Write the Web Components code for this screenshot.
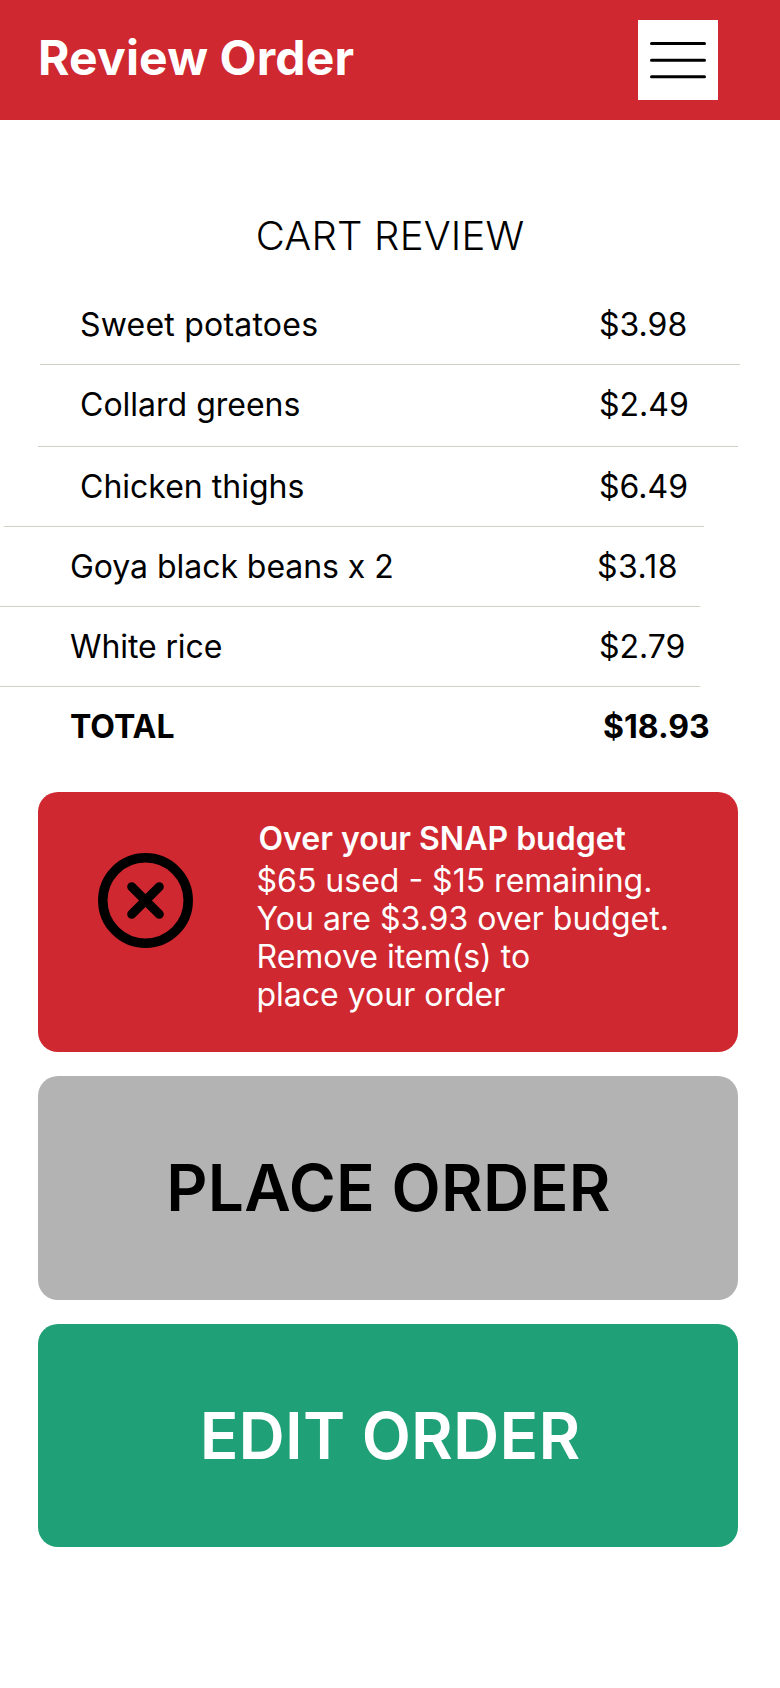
<!DOCTYPE html>
<html lang="en">
<head>
<meta charset="utf-8">
<title>Review Order</title>
<style>
    html, body { margin: 0; padding: 0; background: #fff; }
    body { font-family: Inter, "Liberation Sans", sans-serif; color: #000; }
</style>
</head>
<body>
<order-page>
    <app-header>Review Order</app-header>
    <cart-review heading="CART REVIEW">
        <cart-row inset="40" name-x="40" price-x="559" height="82" shift="1" name-spacing="0.22" name="Sweet potatoes" price="$3.98"></cart-row>
        <cart-row inset="38" name-x="42" price-x="561" height="82" shift="-1" name="Collard greens" price="$2.49"></cart-row>
        <cart-row inset="4" name-x="76" price-x="595" height="80" name="Chicken thighs" price="$6.49"></cart-row>
        <cart-row inset="0" name-x="70" price-x="597" height="80" name-spacing="-0.05" price-spacing="0.4" name="Goya black beans x 2" price="$3.18"></cart-row>
        <cart-row inset="0" name-x="70" price-x="599" height="80" name-spacing="-0.1" name="White rice" price="$2.79"></cart-row>
        <cart-row inset="0" name-x="70" price-x="603" height="80" shift="-1" name="TOTAL" price="$18.93" total></cart-row>
    </cart-review>
    <budget-alert heading="Over your SNAP budget">
        $65 used - $15 remaining.<br>You are $3.93 over budget.<br>Remove item(s) to<br>place your order
    </budget-alert>
    <action-button kind="disabled" weight="600" nudge="1" spacing="0.3">PLACE ORDER</action-button>
    <action-button kind="edit" weight="600" nudge="4" spacing="0.2">EDIT ORDER</action-button>
</order-page>
<script>
class OrderPage extends HTMLElement {
    connectedCallback() {
        this.attachShadow({ mode: 'open' });
        this.shadowRoot.innerHTML = `
            <style>
                :host {
                    display: block;
                    width: 780px;
                    height: 1688px;
                    overflow: hidden;
                    background: #fff;
                }
            </style>
            <slot></slot>
        `;
    }
}

class AppHeader extends HTMLElement {
    connectedCallback() {
        this.attachShadow({ mode: 'open' });
        this.shadowRoot.innerHTML = `
            <style>
                :host {
                    display: flex;
                    justify-content: space-between;
                    align-items: center;
                    box-sizing: border-box;
                    height: 120px;
                    padding: 0 62px 0 38px;
                    background: #cf2830;
                    color: #fff;
                }
                .title {
                    margin-top: -4px;
                    font-size: 48px;
                    font-weight: 700;
                    line-height: 1;
                    letter-spacing: 0.15px;
                }
                svg {
                    display: block;
                    width: 80px;
                    height: 80px;
                    background: #fff;
                }
            </style>
            <div class="title"><slot></slot></div>
            <svg viewBox="0 0 80 80" stroke="#000" stroke-width="3" stroke-linecap="round" aria-label="Menu">
                <path d="M13.5 23.4H66.5M13.5 40.2H66.5M13.5 56.7H66.5"/>
            </svg>
        `;
    }
}

class CartReview extends HTMLElement {
    connectedCallback() {
        this.attachShadow({ mode: 'open' });
        this.shadowRoot.innerHTML = `
            <style>
                :host {
                    display: block;
                    padding-top: 89px;
                }
                h2 {
                    margin: 0 0 21px;
                    height: 53px;
                    font-size: 40px;
                    font-weight: 300;
                    line-height: 53px;
                    letter-spacing: 0.2px;
                    text-align: center;
                }
            </style>
            <h2>${this.getAttribute('heading')}</h2>
            <slot></slot>
        `;
    }
}

class CartRow extends HTMLElement {
    connectedCallback() {
        const inset = this.getAttribute('inset');
        const nameX = this.getAttribute('name-x');
        const priceX = this.getAttribute('price-x');
        const total = this.hasAttribute('total');
        // shift moves the text down (or up) inside its row, the divider stays put
        const shift = Number(this.getAttribute('shift') || 0);
        this.attachShadow({ mode: 'open' });
        this.shadowRoot.innerHTML = `
            <style>
                :host {
                    display: grid;
                    grid-template-columns: ${priceX}px 1fr;
                    align-items: center;
                    box-sizing: border-box;
                    width: ${total ? 720 : 700}px;
                    height: ${this.getAttribute('height')}px;
                    margin-left: ${inset}px;
                    padding-left: ${nameX}px;
                    padding-top: ${Math.max(shift, 0) * 2}px;
                    padding-bottom: ${Math.max(-shift, 0) * 2}px;
                    font-size: 32px;
                    font-weight: ${total ? 700 : 400};
                    border-bottom: ${total ? 'none' : '1px solid #d0d0c4'};
                }
                .name { letter-spacing: ${this.getAttribute('name-spacing') || 0}px; }
                .price {
                    margin-left: -${nameX}px;
                    letter-spacing: ${this.getAttribute('price-spacing') || 0}px;
                }
            </style>
            <div class="name">${this.getAttribute('name')}</div>
            <div class="price">${this.getAttribute('price')}</div>
        `;
    }
}

class BudgetAlert extends HTMLElement {
    connectedCallback() {
        this.attachShadow({ mode: 'open' });
        this.shadowRoot.innerHTML = `
            <style>
                :host {
                    display: flex;
                    align-items: flex-start;
                    box-sizing: border-box;
                    width: 700px;
                    height: 260px;
                    margin: 25px 0 0 38px;
                    border-radius: 20px;
                    background: #cf2830;
                    color: #fff;
                }
                svg {
                    flex: none;
                    width: 95px;
                    height: 95px;
                    margin: 61px 64px 0 59.5px;
                }
                .text { padding-top: 28px; font-size: 32px; line-height: 38px; }
                h3 {
                    margin: 0 0 4px 2px;
                    font-size: 32px;
                    font-weight: 600;
                    line-height: 38px;
                }
            </style>
            <svg viewBox="0 0 95 95" fill="none" stroke="#000" stroke-linecap="round">
                <circle cx="47.5" cy="47.5" r="42.7" stroke-width="9.5"/>
                <path d="M33.7 33.7 L61.3 61.3 M61.3 33.7 L33.7 61.3" stroke-width="9"/>
            </svg>
            <div class="text">
                <h3>${this.getAttribute('heading')}</h3>
                <slot></slot>
            </div>
        `;
    }
}

class ActionButton extends HTMLElement {
    connectedCallback() {
        const colors = {
            disabled: { bg: '#b3b3b3', fg: '#000' },
            edit: { bg: '#1fa076', fg: '#fff' }
        };
        const c = colors[this.getAttribute('kind')];
        this.attachShadow({ mode: 'open' });
        this.shadowRoot.innerHTML = `
            <style>
                :host {
                    display: flex;
                    justify-content: center;
                    align-items: center;
                    box-sizing: border-box;
                    width: 700px;
                    height: 223.5px;
                    margin: 24px 0 0 38px;
                    padding-left: ${this.getAttribute('nudge')}px;
                    border-radius: 20px;
                    background: ${c.bg};
                    color: ${c.fg};
                    font-size: 64px;
                    font-weight: ${this.getAttribute('weight')};
                    letter-spacing: ${this.getAttribute('spacing')}px;
                }
            </style>
            <slot></slot>
        `;
    }
}

customElements.define('order-page', OrderPage);
customElements.define('app-header', AppHeader);
customElements.define('cart-review', CartReview);
customElements.define('cart-row', CartRow);
customElements.define('budget-alert', BudgetAlert);
customElements.define('action-button', ActionButton);
</script>
</body>
</html>
